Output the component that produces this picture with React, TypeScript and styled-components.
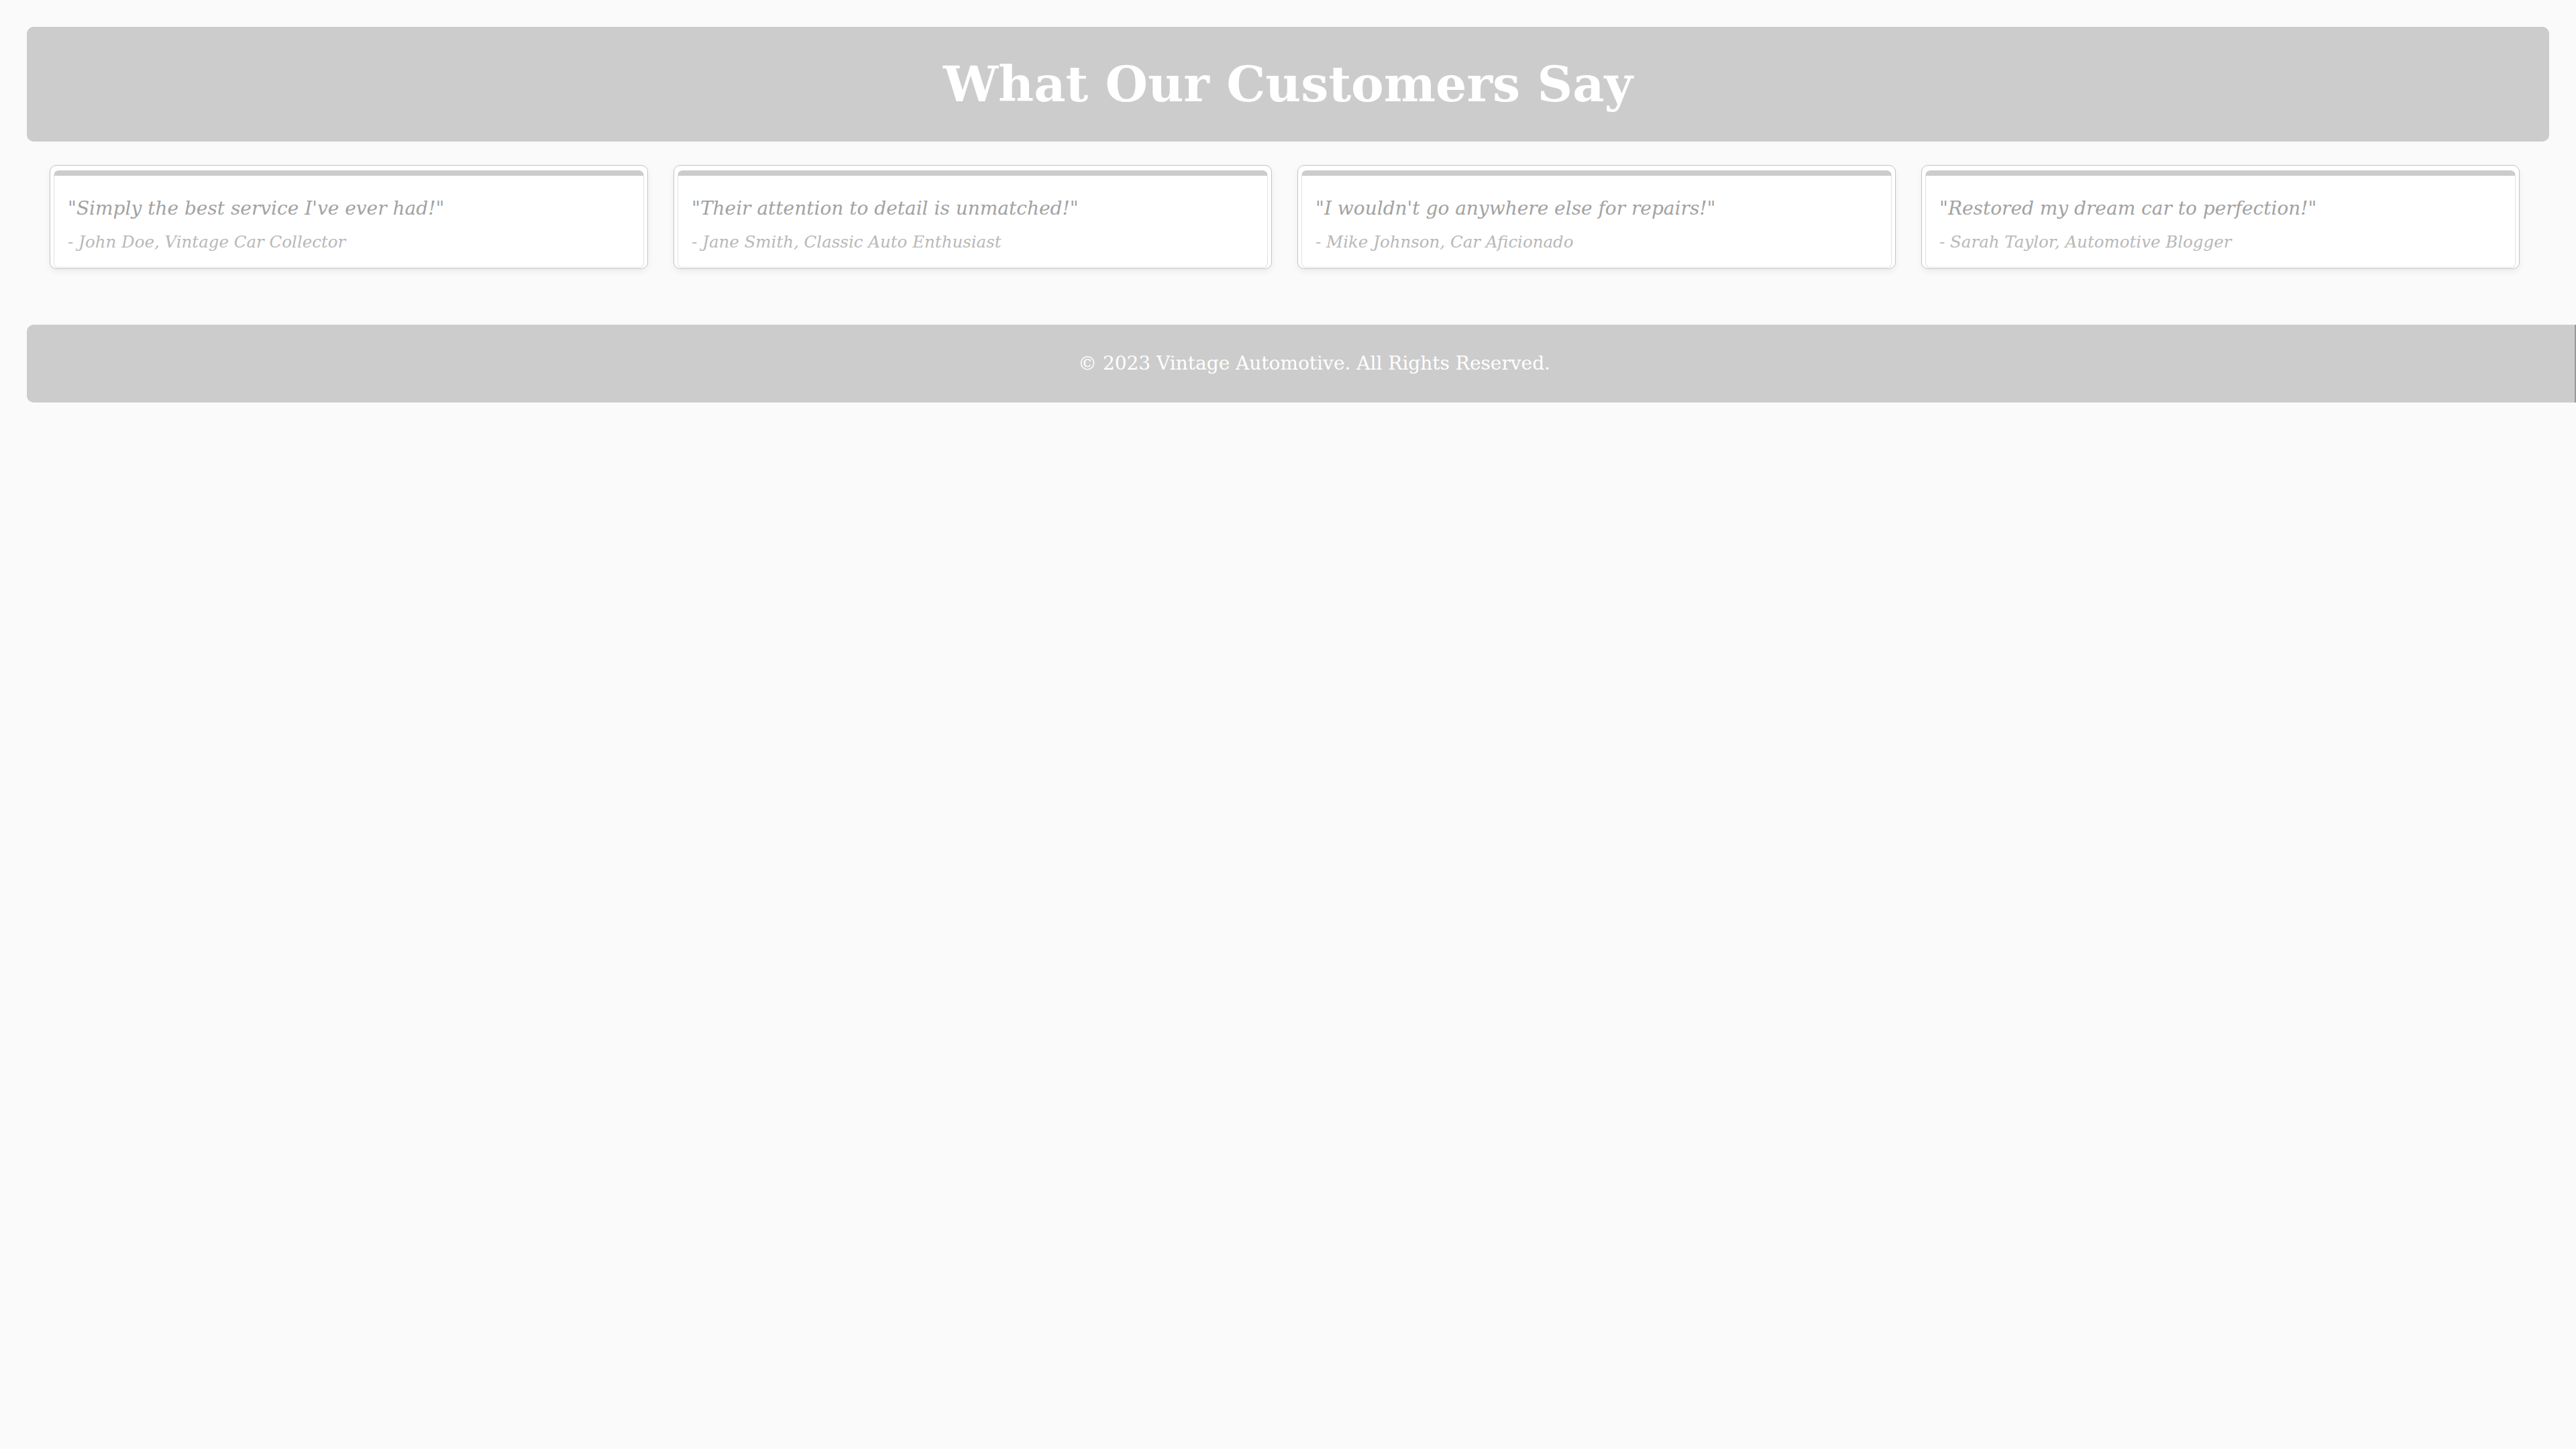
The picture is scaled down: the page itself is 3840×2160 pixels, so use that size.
import React from 'react'
import styled, { createGlobalStyle } from 'styled-components'

const GlobalStyle = createGlobalStyle`
  body {
    margin: 0;
    background: #fafafa;
    font-family: Georgia, 'DejaVu Serif', serif;
    font-size: 28px;
    color: #999;
  }
`

const Page = styled.div`
  padding: 40px;
`

const Header = styled.header`
  background: #ccc;
  border-radius: 10px;
  padding: 40px;
  text-align: center;
`

const Title = styled.h1`
  margin: 0;
  font-size: 73px;
  font-weight: bold;
  color: #fff;
  line-height: 91px;
`

const CardRow = styled.section`
  display: flex;
  gap: 38px;
  padding: 35px 44px 83px 34px;
`

const Card = styled.div`
  flex: 1;
  background: #fff;
  border: 1px solid #c4c4c4;
  border-radius: 10px;
  padding: 7px 5px 1px;
  box-shadow: 0 4px 10px rgba(0, 0, 0, 0.06);
`

const CardBody = styled.div`
  border-top: 8px solid #ccc;
  border-left: 1px solid #e2e2e2;
  border-right: 1px solid #e2e2e2;
  border-bottom: 1px solid #e2e2e2;
  border-radius: 8px 8px 6px 6px;
  padding: 31px 20px 21px 20px;
`

const Quote = styled.p`
  margin: 0 0 16px;
  font-style: italic;
  font-size: 28px;
  line-height: 36px;
  color: #a2a2a2;
`

const Author = styled.p`
  margin: 0;
  font-style: italic;
  font-size: 24.5px;
  line-height: 32px;
  color: #b8b8b8;
`

/* runs past the right page margin to the window edge, as in the original */
const Footer = styled.footer`
  margin-right: -40px;
  background: #ccc;
  border-radius: 10px 0 0 10px;
  border-right: 2px solid #999;
  padding: 40px 40px 40px 80px;
  text-align: center;
  color: #fff;
  font-size: 28px;
  line-height: 36px;
`

const testimonials = [
  { quote: '"Simply the best service I\'ve ever had!"', author: '- John Doe, Vintage Car Collector' },
  { quote: '"Their attention to detail is unmatched!"', author: '- Jane Smith, Classic Auto Enthusiast' },
  { quote: '"I wouldn\'t go anywhere else for repairs!"', author: '- Mike Johnson, Car Aficionado' },
  { quote: '"Restored my dream car to perfection!"', author: '- Sarah Taylor, Automotive Blogger' },
]

export default function App() {
  return (
    <Page>
      <GlobalStyle />
      <Header>
        <Title>What Our Customers Say</Title>
      </Header>
      <CardRow>
        {testimonials.map((t) => (
          <Card key={t.author}>
            <CardBody>
              <Quote>{t.quote}</Quote>
              <Author>{t.author}</Author>
            </CardBody>
          </Card>
        ))}
      </CardRow>
      <Footer>&copy; 2023 Vintage Automotive. All Rights Reserved.</Footer>
    </Page>
  )
}
